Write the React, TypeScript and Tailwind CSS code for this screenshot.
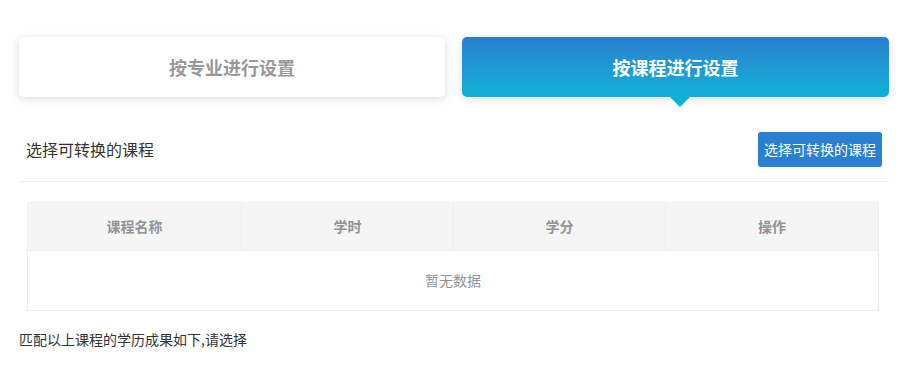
import React from "react";

export default function App() {
  const font = { fontFamily: '"Noto Sans CJK SC", "Noto Sans", sans-serif' };
  return (
    <div className="w-[904px] h-[371px] bg-white overflow-hidden" style={font}>
      <div className="w-[870px] ml-[19px] pt-[37px]">
        <div className="flex gap-[17px]">
          <div className="w-[426px] h-[60px] rounded-[5px] bg-white shadow-[0_2px_10px_rgba(0,0,0,0.14)] flex items-center justify-center text-[18px] font-bold text-[#999999]">
            按专业进行设置
          </div>
          <div className="relative w-[427px] h-[60px] rounded-[5px] bg-gradient-to-b from-[#2a7ecf] to-[#0cb2d6] shadow-[0_2px_10px_rgba(0,0,0,0.12)] flex items-center justify-center text-[18px] font-bold text-white">
            按课程进行设置
            <div className="absolute left-[208px] top-[60px] w-0 h-0 border-l-[10px] border-r-[10px] border-t-[10px] border-l-transparent border-r-transparent border-t-[#0cb2d6]" />
          </div>
        </div>
        <div className="mt-[35px] h-[50px] flex items-start justify-between border-b border-[#f0f0f0] px-[7px]">
          <div className="text-[16px] text-[#333333] leading-[35px]">选择可转换的课程</div>
          <button className="h-[35px] w-[124px] rounded-[3px] bg-[#2a7fd0] text-white text-[14px] flex items-center justify-center">
            选择可转换的课程
          </button>
        </div>
        <div className="mt-[20px] ml-[8px] w-[852px] border border-[#ebeef5]">
          <div className="grid grid-cols-[214px_212px_212px_1fr] h-[48px] bg-[#f5f5f5] border-b border-[#ebeef5] text-[14px] font-bold text-[#909399]">
            <div className="flex items-center justify-center border-r border-[#ebeef5]">课程名称</div>
            <div className="flex items-center justify-center border-r border-[#ebeef5]">学时</div>
            <div className="flex items-center justify-center border-r border-[#ebeef5]">学分</div>
            <div className="flex items-center justify-center">操作</div>
          </div>
          <div className="h-[59px] flex items-center justify-center text-[14px] text-[#909399]">暂无数据</div>
        </div>
        <div className="mt-[18px] text-[14px] text-[#333333] leading-[20px]">匹配以上课程的学历成果如下,请选择</div>
      </div>
    </div>
  );
}
